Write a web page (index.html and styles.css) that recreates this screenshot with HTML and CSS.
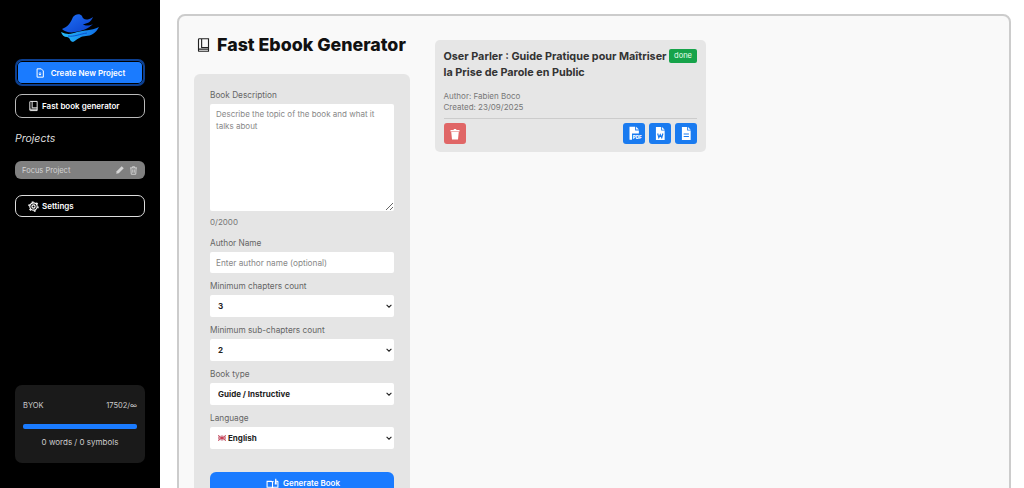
FILE: index.html
```html
<!DOCTYPE html>
<html lang="en">
<head>
<meta charset="utf-8">
<title>Fast Ebook Generator</title>
<link rel="stylesheet" href="styles.css">
</head>
<body>
<aside class="sidebar">
  <div class="logo">
    <svg width="40" height="29" viewBox="0 0 40 29">
      <defs>
        <linearGradient id="lg1" x1="0" y1="0" x2="1" y2="1"><stop offset="0" stop-color="#1f72f8"/><stop offset="1" stop-color="#0b3fc8"/></linearGradient>
        <linearGradient id="lg2" x1="0" y1="0" x2="1" y2="0"><stop offset="0" stop-color="#26bdf7"/><stop offset="1" stop-color="#0f6ce8"/></linearGradient>
      </defs>
      <path fill="url(#lg1)" d="M2 15C8 13 11 8 13 3 15 0 20-1 22 2 23 6 27 7 33 3 31 8 27 10 23 10 25 12 29 12 33 10 28 15 22 17 15 18 10 19 5 18 2 15Z"/>
      <path fill="url(#lg2)" d="M1 18C7 21 12 20 17 18 24 16 31 17 39 13 36 19 31 22 26 22 21 22 18 25 13 28 9 27 11 24 7 23 4 23 2 21 1 18Z"/>
      <path fill="none" stroke="#0b4fd0" stroke-width="1" d="M8 22C14 23 20 20 27 19"/>
    </svg>
  </div>
  <button class="side-btn primary">
    <svg class="ic" viewBox="0 0 24 24" width="10" height="12"><path fill="none" stroke="currentColor" stroke-width="2.400" d="M5 2h10l5 5v15H5zM12 10v7M9 14l3 3 3-3"/></svg>
    Create New Project
  </button>
  <button class="side-btn outline book-btn">
    <svg class="ic" viewBox="0 0 24 24" width="11" height="12"><path fill="none" stroke="currentColor" stroke-width="2" d="M5 2h15v20H5a1 1 0 0 1-1-1V3a1 1 0 0 1 1-1zM9 2v14h11M4 19h16"/></svg>
    Fast book generator
  </button>
  <h2 class="projects-title">Projects</h2>
  <div class="project-item">
    <span class="project-name">Focus Project</span>
    <svg viewBox="0 0 24 24" width="10" height="10"><path fill="currentColor" d="M3 21l1-6L16 3l5 5L9 20z"/></svg>
    <svg viewBox="0 0 24 24" width="9" height="11"><path fill="none" stroke="currentColor" stroke-width="2.500" d="M3 5h18M9 5V2h6v3M5 5l1 17h12l1-17M10 9v9M14 9v9"/></svg>
  </div>
  <button class="side-btn outline settings-btn">
    <svg class="ic" viewBox="0 0 24 24" width="11" height="11"><circle cx="12" cy="12" r="3.500" fill="none" stroke="currentColor" stroke-width="2.500"/><circle cx="12" cy="12" r="8" fill="none" stroke="currentColor" stroke-width="2.400"/><circle cx="12" cy="12" r="10" fill="none" stroke="currentColor" stroke-width="3" stroke-dasharray="4 6.470"/></svg>
    Settings
  </button>
  <div class="usage">
    <div class="usage-row"><span>BYOK</span><span>17502/∞</span></div>
    <div class="usage-bar"></div>
    <div class="usage-note">0 words / 0 symbols</div>
  </div>
</aside>
<main class="main">
  <section class="panel">
    <div class="left-col">
      <h1 class="title">
        <svg viewBox="0 0 24 24" width="15" height="16"><path fill="none" stroke="#222" stroke-width="1.800" d="M5 2h15v20H5a1 1 0 0 1-1-1V3a1 1 0 0 1 1-1zM9 2v14h11M4 18.500h16"/></svg>
        Fast Ebook Generator
      </h1>
      <form class="form-card">
        <label class="lbl">Book Description</label>
        <textarea class="area" placeholder="Describe the topic of the book and what it talks about"></textarea>
        <div class="counter">0/2000</div>
        <label class="lbl">Author Name</label>
        <input class="field" placeholder="Enter author name (optional)">
        <label class="lbl">Minimum chapters count</label>
        <select class="sel"><option>3</option></select>
        <label class="lbl">Minimum sub-chapters count</label>
        <select class="sel"><option>2</option></select>
        <label class="lbl">Book type</label>
        <select class="sel"><option>Guide / Instructive</option></select>
        <label class="lbl">Language</label>
        <div class="sel lang"><span class="flag"><svg viewBox="0 0 14 9" width="8" height="6"><rect width="14" height="9" fill="#e6dfe6"/><path stroke="#c8344a" stroke-width="1.600" d="M0 0l14 9M14 0L0 9M7 0v9M0 4.500h14"/></svg></span>English</div>
        <button type="button" class="gen">
          <svg viewBox="0 0 24 20" width="13" height="11"><path fill="none" stroke="currentColor" stroke-width="2" d="M2 6h8a2 2 0 0 1 2 2v11a2 2 0 0 0-2-2H2zM22 6h-3M12 8a2 2 0 0 1 2-2M12 19a2 2 0 0 1 2-2h8V6"/><path fill="currentColor" d="M16 12l1-11 2 0 1 11z"/></svg>
          Generate Book
        </button>
      </form>
    </div>
    <article class="book-card">
      <div class="book-head">
        <h3 class="book-title">Oser Parler : Guide Pratique pour Maîtriser la Prise de Parole en Public</h3>
        <span class="badge">done</span>
      </div>
      <div class="meta">Author: Fabien Boco<br>Created: 23/09/2025</div>
      <div class="actions">
        <button class="act danger"><svg viewBox="0 0 24 24" width="12" height="14"><path fill="#fff" d="M3 4h6l1-2h4l1 2h6v3H3zM4.500 8h15L18 23H6z"/></svg></button>
        <span class="spacer"></span>
        <button class="act blue"><svg viewBox="0 0 24 24" width="15" height="15"><path fill="#fff" d="M4 1h9v6h6v5H8v10H4z"/><path fill="#fff" d="M14.500 1l4.500 4.500h-4.500z"/><text x="9" y="20.500" font-size="7.500" font-weight="800" fill="#fff" font-family="Inter, sans-serif">PDF</text></svg></button>
        <button class="act blue"><svg viewBox="0 0 24 24" width="14" height="15"><path fill="#fff" d="M5 1h9v6h6v16H5zM15.500 1l4.500 4.500h-4.500z"/><path fill="none" stroke="#1a7bf0" stroke-width="2" d="M8 12l2 7 2.500-5 2.500 5 2-7"/></svg></button>
        <button class="act blue"><svg viewBox="0 0 24 24" width="14" height="15"><path fill="#fff" d="M5 1h9v6h6v16H5zM15.500 1l4.500 4.500h-4.500z"/><path stroke="#1a7bf0" stroke-width="1.800" d="M8 13h9M8 17h9"/></svg></button>
      </div>
    </article>
  </section>
</main>
</body>
</html>
```
FILE: styles.css
```css
* { box-sizing: border-box; }
html, body { margin: 0; height: 488px; overflow: hidden; }
body { display: flex; background: #fff; font-family: "Inter", "Open Sans", sans-serif; color: #222; }
button, input, select, textarea { font-family: inherit; }

.sidebar { width: 160px; height: 488px; flex: none; background: #000; color: #fff; padding: 14px 15px 25px; display: flex; flex-direction: column; }
.logo { height: 45px; display: flex; justify-content: center; align-items: flex-start; }
.side-btn { display: flex; align-items: center; font-size: 8px; font-weight: 600; color: #fff; border-radius: 7px; cursor: pointer; }
.ic { flex: none; }
.primary { height: 27px; background: #1a7bff; border: 2px solid #0d3f8f; box-shadow: inset 0 0 0 1px #000; justify-content: center; gap: 6px; }
.outline { background: #000; border: 1.500px solid #bbb; padding-left: 12px; gap: 3px; }
.book-btn { height: 24px; margin-top: 8px; }
.projects-title { font-size: 10.500px; font-weight: 400; font-style: italic; color: #ddd; margin: 14px 0 15px; line-height: 14px; }
.project-item { height: 18px; background: #808080; border-radius: 6px; display: flex; align-items: center; gap: 4px; padding: 0 7px; color: #d4d4d4; font-size: 7.500px; }
.project-name { flex: 1; }
.settings-btn { height: 22px; margin-top: 16px; border-color: #ddd; }
.usage { margin-top: auto; height: 78px; background: #1a1a1a; border-radius: 7px; padding: 15px 8px 0; font-size: 7.500px; color: #ccc; }
.usage-row { display: flex; justify-content: space-between; line-height: 12px; }
.usage-bar { height: 5px; background: #1a7bff; border-radius: 2px; margin-top: 12px; }
.usage-note { text-align: center; margin-top: 7px; font-size: 8px; line-height: 12px; }

.main { flex: 1; height: 488px; overflow: hidden; padding: 14px 13px 0 17px; min-width: 0; }
.panel { height: 520px; background: #f9f9f9; border: 2px solid #ccc; border-radius: 8px; padding: 16px 15px 0; display: flex; align-items: flex-start; gap: 25px; }
.left-col { width: 216px; flex: none; }
.title { display: flex; align-items: center; gap: 6px; margin: 0 0 16px 2px; font-size: 17.800px; line-height: 26px; font-weight: 800; color: #111; white-space: nowrap; }
.form-card { background: #e5e5e5; border-radius: 6px; padding: 15px 16px 20px; display: flex; flex-direction: column; }
.lbl { font-size: 8.250px; line-height: 12px; color: #666; margin-bottom: 3px; }
.area { height: 107px; border: 0; border-radius: 2px; background: #fff; padding: 5px 6px; font-size: 8px; line-height: 11.500px; resize: vertical; display: block; width: 100%; }
.area::placeholder, .field::placeholder { color: #888; opacity: 1; }
.counter { font-size: 8px; line-height: 12px; color: #777; margin: 5px 0 9px; }
.field { height: 21px; border: 0; border-radius: 2px; background: #fff; padding: 0 6px; font-size: 8.250px; margin-bottom: 7px; width: 100%; }
.sel { height: 22px; border: 0; border-radius: 2px; background: #fff url("data:image/svg+xml,%3Csvg xmlns='http://www.w3.org/2000/svg' viewBox='0 0 10 6'%3E%3Cpath fill='none' stroke='%23222' stroke-width='1.800' d='M1 1l4 4 4-4'/%3E%3C/svg%3E") no-repeat right 2px center / 6px 4px; appearance: none; padding: 0 8px; font-size: 8px; font-weight: 700; color: #222; margin-bottom: 7px; width: 100%; }
.lang { display: flex; align-items: center; gap: 2px; margin-bottom: 23px; }
.flag { display: flex; }
.gen { height: 26px; border: 0; border-radius: 6px; background: #1a7bff; color: #fff; font-size: 8px; font-weight: 600; display: flex; align-items: center; justify-content: center; gap: 4px; padding: 0 0 4px 2px; }

.book-card { width: 271px; margin-top: 8px; background: #e6e6e6; border-radius: 5px; padding: 9px 9px 8px 8.500px; }
.book-head { display: flex; align-items: flex-start; justify-content: space-between; }
.book-title { margin: 0; font-size: 10.800px; line-height: 15.500px; font-weight: 700; color: #333; width: 226px; }
.badge { background: #16a34a; color: #e9fff0; font-size: 7.500px; line-height: 14px; height: 14px; padding: 0 5px; border-radius: 2px; }
.meta { font-size: 8px; line-height: 11px; color: #777; margin-top: 11px; padding-bottom: 5px; border-bottom: 1px solid #ccc; }
.actions { display: flex; gap: 4px; margin-top: 4px; }
.spacer { flex: 1; }
.act { width: 22px; height: 21px; border: 0; border-radius: 3px; padding: 0; display: flex; align-items: center; justify-content: center; }
.danger { background: #e06666; }
.blue { background: #1a7bf0; }
```
